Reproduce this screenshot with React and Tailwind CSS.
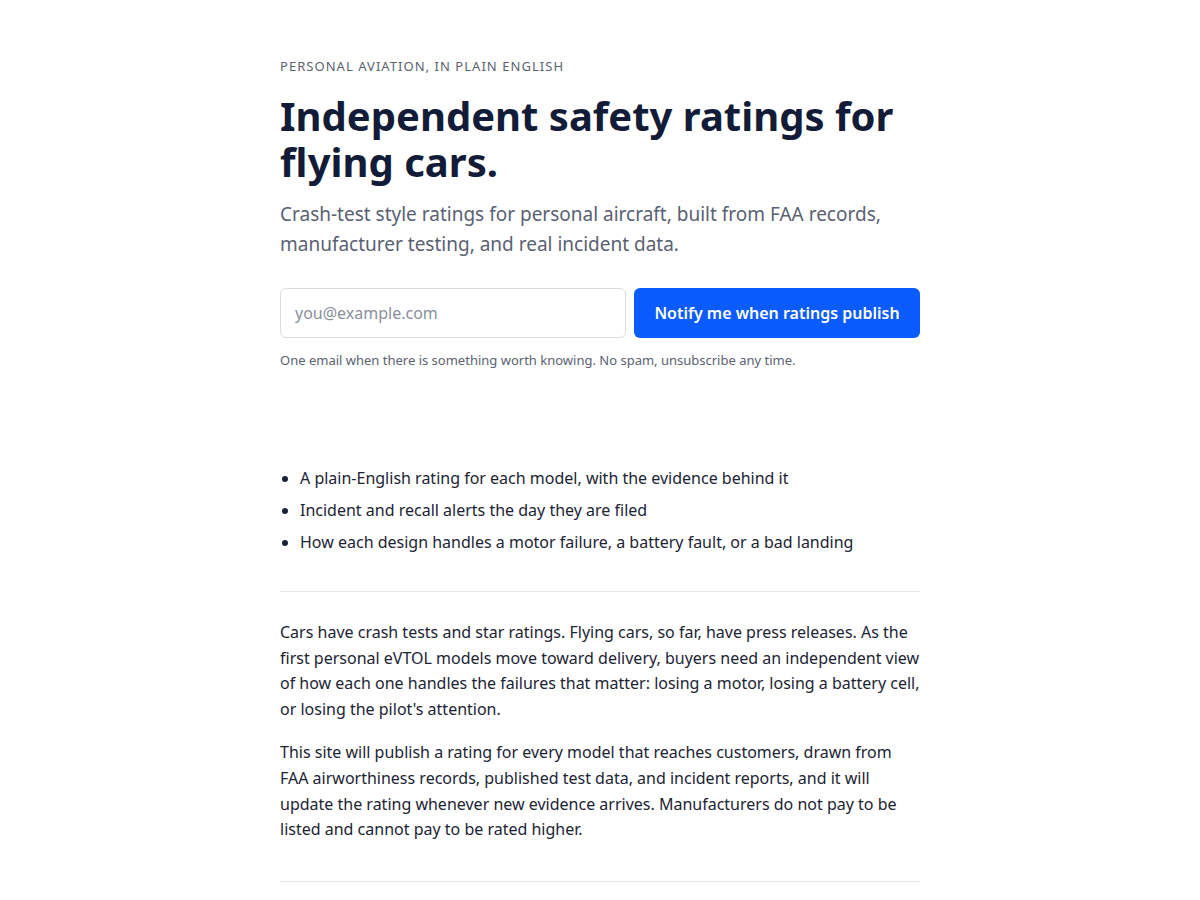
export default function App() {
  return (
    <div className="min-h-screen bg-white font-['Noto_Sans',sans-serif] text-[#1c2434]">
      <main className="mx-auto w-[640px] pt-[56px] pb-10">
        {/* Hero */}
        <p className="text-[13px] leading-5 tracking-[0.08em] uppercase text-[#5b6270]">
          Personal aviation, in plain English
        </p>
        <h1 className="mt-[17px] text-[40px] leading-[46px] font-bold text-[#121c38]">
          Independent safety ratings for flying cars.
        </h1>
        <p className="mt-[14px] text-[19px] leading-[30px] text-[#5a6173]">
          Crash-test style ratings for personal aircraft, built from FAA records,
          manufacturer testing, and real incident data.
        </p>

        <form className="mt-[29px] flex gap-2" onSubmit={(e) => e.preventDefault()}>
          <input
            type="email"
            placeholder="you@example.com"
            className="h-[50px] flex-1 rounded-md border border-[#d9dce1] px-[14px] text-[16px] text-[#1c2434] placeholder:text-[#8a909b] outline-none"
          />
          <button
            type="submit"
            className="h-[50px] w-[286px] rounded-md bg-[#0b5cff] text-[16px] font-semibold text-white"
          >
            Notify me when ratings publish
          </button>
        </form>
        <p className="mt-3 text-[13px] leading-5 text-[#5b6270]">
          One email when there is something worth knowing. No spam, unsubscribe any time.
        </p>

        {/* What you get */}
        <ul className="mt-[95px] list-disc pl-5 text-[16px] leading-[26px]">
          <li className="mb-[6px]">A plain-English rating for each model, with the evidence behind it</li>
          <li className="mb-[6px]">Incident and recall alerts the day they are filed</li>
          <li>How each design handles a motor failure, a battery fault, or a bad landing</li>
        </ul>

        <hr className="mt-[36px] border-[#e5e7eb]" />

        {/* About */}
        <div className="mt-[28px] space-y-[18px] text-[16px] leading-[25.6px]">
          <p>
            Cars have crash tests and star ratings. Flying cars, so far, have press releases. As the
            first personal eVTOL models move toward delivery, buyers need an independent view of how
            each one handles the failures that matter: losing a motor, losing a battery cell, or
            losing the pilot's attention.
          </p>
          <p>
            This site will publish a rating for every model that reaches customers, drawn from FAA
            airworthiness records, published test data, and incident reports, and it will update the
            rating whenever new evidence arrives. Manufacturers do not pay to be listed and cannot pay
            to be rated higher.
          </p>
        </div>

        <hr className="mt-[38px] border-[#e5e7eb]" />
      </main>
    </div>
  );
}
